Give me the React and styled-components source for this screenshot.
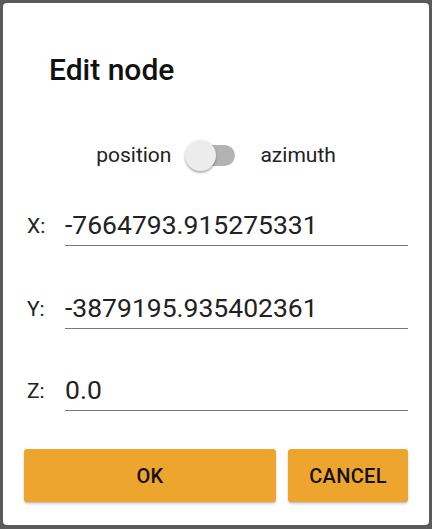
import React, { useState } from "react";
import styled, { createGlobalStyle } from "styled-components";

const GlobalStyle = createGlobalStyle`
  html, body {
    margin: 0;
    padding: 0;
    background: #5a5a5a;
    font-family: Roboto, "Liberation Sans", sans-serif;
  }
  * { box-sizing: border-box; }
`;

const Dialog = styled.div`
  margin: 3px;
  width: 426px;
  height: 522px;
  background: #fff;
  border-radius: 4px;
  display: flex;
  flex-direction: column;
  padding: 0 21px 0 21px;
`;

const Title = styled.h2`
  margin: 0;
  padding: 49px 0 0 25px;
  font-size: 30px;
  font-weight: 500;
  line-height: 36px;
  color: #111;
`;

const ToggleRow = styled.div`
  display: flex;
  align-items: center;
  justify-content: center;
  margin-top: 47px;
  height: 40px;
  font-size: 21px;
  color: #222;
`;

const Switch = styled.button`
  position: relative;
  width: 50px;
  height: 31px;
  margin: 0 25px 0 14px;
  border: 0;
  padding: 0;
  background: transparent;
  cursor: pointer;
`;

const Track = styled.span`
  position: absolute;
  left: 4px;
  right: 0;
  top: 5px;
  height: 21px;
  border-radius: 11px;
  background: ${(p) => (p.on ? "#f5c77e" : "#b3b3b3")};
`;

const Thumb = styled.span`
  position: absolute;
  top: 0;
  left: ${(p) => (p.on ? "19px" : "0")};
  width: 31px;
  height: 31px;
  border-radius: 50%;
  background: ${(p) => (p.on ? "#eea52e" : "#ececec")};
  box-shadow: 0 2px 2px rgba(0, 0, 0, 0.22), 0 1px 3px rgba(0, 0, 0, 0.14);
`;

const Fields = styled.div`
  display: flex;
  flex-direction: column;
  gap: 43.5px;
  margin-top: 32px;
`;

const FieldRow = styled.label`
  display: flex;
  align-items: flex-end;
`;

const FieldLabel = styled.span`
  width: 41px;
  padding-left: 3px;
  padding-bottom: 8px;
  font-size: 21px;
  color: #222;
`;

const Input = styled.input`
  flex: 1;
  min-width: 0;
  border: 0;
  border-bottom: 1.5px solid #7b7b7b;
  outline: none;
  padding: 2px 0 4px 0;
  font-family: inherit;
  font-size: 26.5px;
  line-height: 32px;
  color: #222;
  background: transparent;
`;

const Actions = styled.div`
  display: flex;
  gap: 12px;
  margin-top: 38px;
`;

const Button = styled.button`
  flex: ${(p) => (p.wide ? 1 : "0 0 120px")};
  height: 53px;
  border: 0;
  border-radius: 3px;
  background: #eea52e;
  color: #111;
  font-family: inherit;
  font-size: 20px;
  font-weight: 500;
  letter-spacing: 0.3px;
  box-shadow: 0 2px 3px rgba(0, 0, 0, 0.18), 0 1px 1px rgba(0, 0, 0, 0.1);
  cursor: pointer;
`;

const fields = [
  { key: "x", label: "X:", value: "-7664793.915275331" },
  { key: "y", label: "Y:", value: "-3879195.935402361" },
  { key: "z", label: "Z:", value: "0.0" },
];

export default function App() {
  const [azimuth, setAzimuth] = useState(false);
  const [values, setValues] = useState(
    Object.fromEntries(fields.map((f) => [f.key, f.value]))
  );

  return (
    <>
      <GlobalStyle />
      <Dialog>
        <Title>Edit node</Title>
        <ToggleRow>
          <span>position</span>
          <Switch onClick={() => setAzimuth(!azimuth)}>
            <Track on={azimuth ? 1 : 0} />
            <Thumb on={azimuth ? 1 : 0} />
          </Switch>
          <span>azimuth</span>
        </ToggleRow>
        <Fields>
          {fields.map((f) => (
            <FieldRow key={f.key}>
              <FieldLabel>{f.label}</FieldLabel>
              <Input
                value={values[f.key]}
                onChange={(e) =>
                  setValues({ ...values, [f.key]: e.target.value })
                }
              />
            </FieldRow>
          ))}
        </Fields>
        <Actions>
          <Button wide>OK</Button>
          <Button>CANCEL</Button>
        </Actions>
      </Dialog>
    </>
  );
}
